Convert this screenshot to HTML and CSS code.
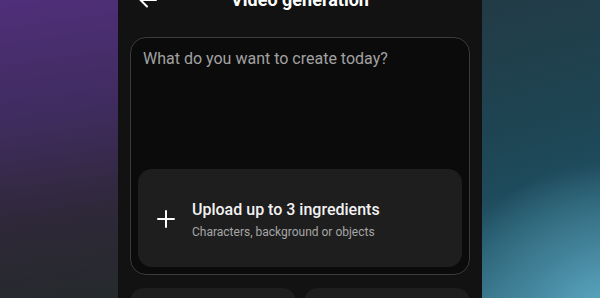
FILE: index.html
```html
<!DOCTYPE html>
<html lang="en">
<head>
  <meta charset="UTF-8">
  <meta name="viewport" content="width=device-width, initial-scale=1.0">
  <title>Video generation</title>
  <link rel="stylesheet" href="styles.css">
</head>
<body>
  <div class="screen">
    <header class="top-bar">
      <button class="back-btn" aria-label="Back">
        <svg width="20" height="20" viewBox="0 0 20 20" fill="none" stroke="#fff" stroke-width="2" stroke-linecap="round" stroke-linejoin="round">
          <path d="M18 10H3M9 3.5L2.5 10L9 16.5"/>
        </svg>
      </button>
      <h1>Video generation</h1>
    </header>

    <div class="prompt-card">
      <p class="placeholder">What do you want to create today?</p>
      <div class="upload-card">
        <svg class="plus" width="18" height="18" viewBox="0 0 18 18" fill="none" stroke="#fff" stroke-width="2" stroke-linecap="round">
          <path d="M9 1v16M1 9h16"/>
        </svg>
        <div class="upload-text">
          <div class="upload-title">Upload up to 3 ingredients</div>
          <div class="upload-sub">Characters, background or objects</div>
        </div>
      </div>
    </div>

    <div class="option-row">
      <button class="option"></button>
      <button class="option"></button>
    </div>
  </div>
</body>
</html>
```

FILE: styles.css
```css
html, body {
  height: 100%;
}
body {
  margin: 0;
  overflow: hidden;
  font-family: Roboto, "Noto Sans", sans-serif;
  display: flex;
  justify-content: center;
  align-items: flex-start;
  background: #1d3a45;
}
/* blurred wallpaper on both sides of the phone */
body::before,
body::after {
  content: "";
  position: fixed;
  top: 0;
  width: 118px;
  height: 100%;
}
body::before {
  left: 0;
  background: linear-gradient(172deg, #4f2f79 0%, #3f2c5e 40%, #2e2838 72%, #252a2c 100%);
}
body::after {
  right: 0;
  background:
    radial-gradient(ellipse 170px 160px at 130px 320px, #5eabc4 0%, rgba(80,150,175,0.6) 50%, rgba(40,90,110,0) 100%),
    linear-gradient(165deg, #223b46 0%, #1e4452 40%, #1e4b5c 60%, #2c6478 85%, #3a7a90 100%);
}
.screen {
  width: 364px;
  box-sizing: border-box;
  padding: 0 12px;
  min-height: 100%;
  background: #121212;
  display: flex;
  flex-direction: column;
  flex-shrink: 0;
}
.screen > * {
  flex-shrink: 0;
}
.top-bar {
  display: flex;
  align-items: center;
  height: 24px;
  margin-top: -12px;
  position: relative;
}
.back-btn {
  margin-left: 8px;
  padding: 0;
  border: none;
  background: none;
  width: 20px;
  height: 20px;
  display: flex;
}
.top-bar h1 {
  position: absolute;
  left: 0;
  right: 0;
  margin: 0;
  text-align: center;
  font-size: 18px;
  line-height: 24px;
  font-weight: 700;
  color: #fff;
  pointer-events: none;
}
.prompt-card {
  margin-top: 25px;
  height: 238px;
  box-sizing: border-box;
  border: 1px solid #3b3b3b;
  border-radius: 16px;
  background: #0b0b0b;
  padding: 7px;
  display: flex;
  flex-direction: column;
}
.placeholder {
  margin: 2px 5px 0;
  font-size: 16px;
  line-height: 24px;
  color: #a2a2a2;
  flex: 1;
}
.upload-card {
  height: 98px;
  border-radius: 14px;
  background: #1e1e1e;
  display: flex;
  align-items: center;
  padding-left: 19px;
  gap: 17px;
}
.plus {
  margin-top: 2px;
}
.upload-text {
  margin-top: 3px;
}
.upload-title {
  font-size: 16px;
  line-height: 22px;
  font-weight: 500;
  color: #f2f2f2;
}
.upload-sub {
  font-size: 12px;
  line-height: 17px;
  color: #a6a6a6;
  margin-top: 3px;
}
.option-row {
  display: flex;
  gap: 8px;
  margin-top: 13px;
}
.option {
  flex: 1;
  height: 48px;
  border: none;
  border-radius: 14px;
  background: #1e1e1e;
}
```
